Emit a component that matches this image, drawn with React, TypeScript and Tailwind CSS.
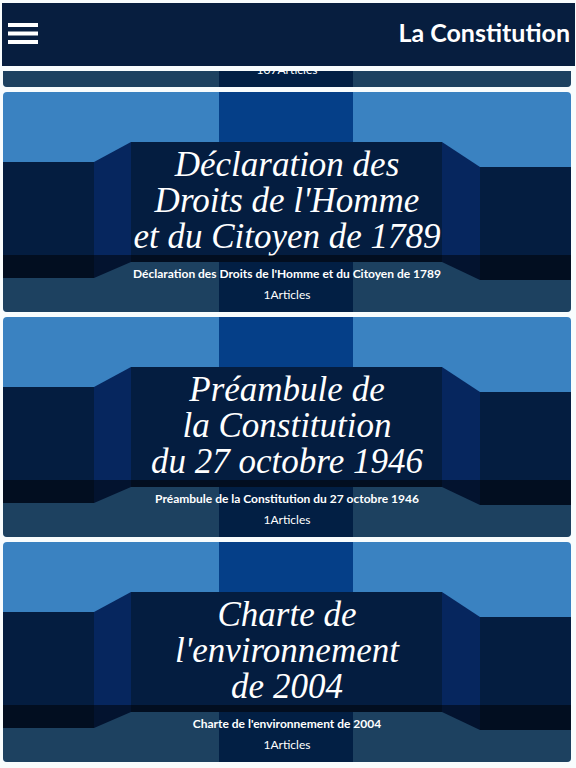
import React from "react";

type Text = {
  id: number;
  cover: string[];
  title: string;
  articles: number;
};

const texts: Text[] = [
  { id: 1, cover: [], title: "", articles: 107 },
  {
    id: 2,
    cover: ["Déclaration des", "Droits de l'Homme", "et du Citoyen de 1789"],
    title: "Déclaration des Droits de l'Homme et du Citoyen de 1789",
    articles: 1,
  },
  {
    id: 3,
    cover: ["Préambule de", "la Constitution", "du 27 octobre 1946"],
    title: "Préambule de la Constitution du 27 octobre 1946",
    articles: 1,
  },
  {
    id: 4,
    cover: ["Charte de", "l'environnement", "de 2004"],
    title: "Charte de l'environnement de 2004",
    articles: 1,
  },
];

// Folded ribbon drawn behind every cover title
const Ribbon = () => (
  <svg
    viewBox="0 0 568 220"
    preserveAspectRatio="none"
    aria-hidden="true"
    className="absolute inset-0 h-full w-full"
  >
    <rect width="568" height="220" fill="#3a82c1" />
    <rect x="216" width="134" height="220" fill="#053f88" />
    <rect y="70" width="91" height="116" fill="#041d40" />
    <polygon points="91,70 128,50 128,170 91,186" fill="#06265e" />
    <rect x="128" y="50" width="311" height="120" fill="#041d40" />
    <polygon points="439,50 477,75 477,188 439,170" fill="#06265e" />
    <rect x="477" y="75" width="91" height="113" fill="#041d40" />
  </svg>
);

const TextCard = ({ text }: { text: Text }) => (
  <article className="relative flex h-[220px] flex-col overflow-hidden rounded-sm text-center text-white">
    <Ribbon />
    <p className="relative pt-[55px] font-['Liberation_Serif',serif] text-[35px] leading-[36px] italic">
      {text.cover.map((line) => (
        <span key={line} className="block">
          {line}
        </span>
      ))}
    </p>
    <div className="absolute inset-x-0 bottom-0 flex h-[57px] flex-col justify-end bg-black/50 pb-[7px]">
      <h2 className="text-[12px] leading-[21px] font-bold">{text.title}</h2>
      <p className="text-[12px] leading-[21px]">{text.articles}Articles</p>
    </div>
  </article>
);

const App = () => {
  return (
    <div className="min-h-screen bg-[#f8fcfd] font-['Lato',sans-serif]">
      <header className="sticky top-0 z-10 bg-[#f8fcfd] pt-[3px] pr-px pb-[5px] pl-[2px]">
        <div className="flex h-[63px] items-center justify-between bg-[#071e3f] pr-[5px] pb-[3px] pl-[6px] text-white">
          <button type="button" aria-label="Menu">
            <svg viewBox="0 0 30 21" className="h-[21px] w-[30px]" fill="currentColor">
              <rect y="0" width="30" height="4" />
              <rect y="8.5" width="30" height="4" />
              <rect y="17" width="30" height="4" />
            </svg>
          </button>
          <h1 className="text-[25px] font-bold">La Constitution</h1>
        </div>
      </header>

      {/* List is scrolled part way under the header */}
      <main className="-mt-[204px] flex flex-col gap-[5px] pr-[5px] pb-[6px] pl-[3px]">
        {texts.map((text) => (
          <TextCard key={text.id} text={text} />
        ))}
      </main>
    </div>
  );
};

export default App;
